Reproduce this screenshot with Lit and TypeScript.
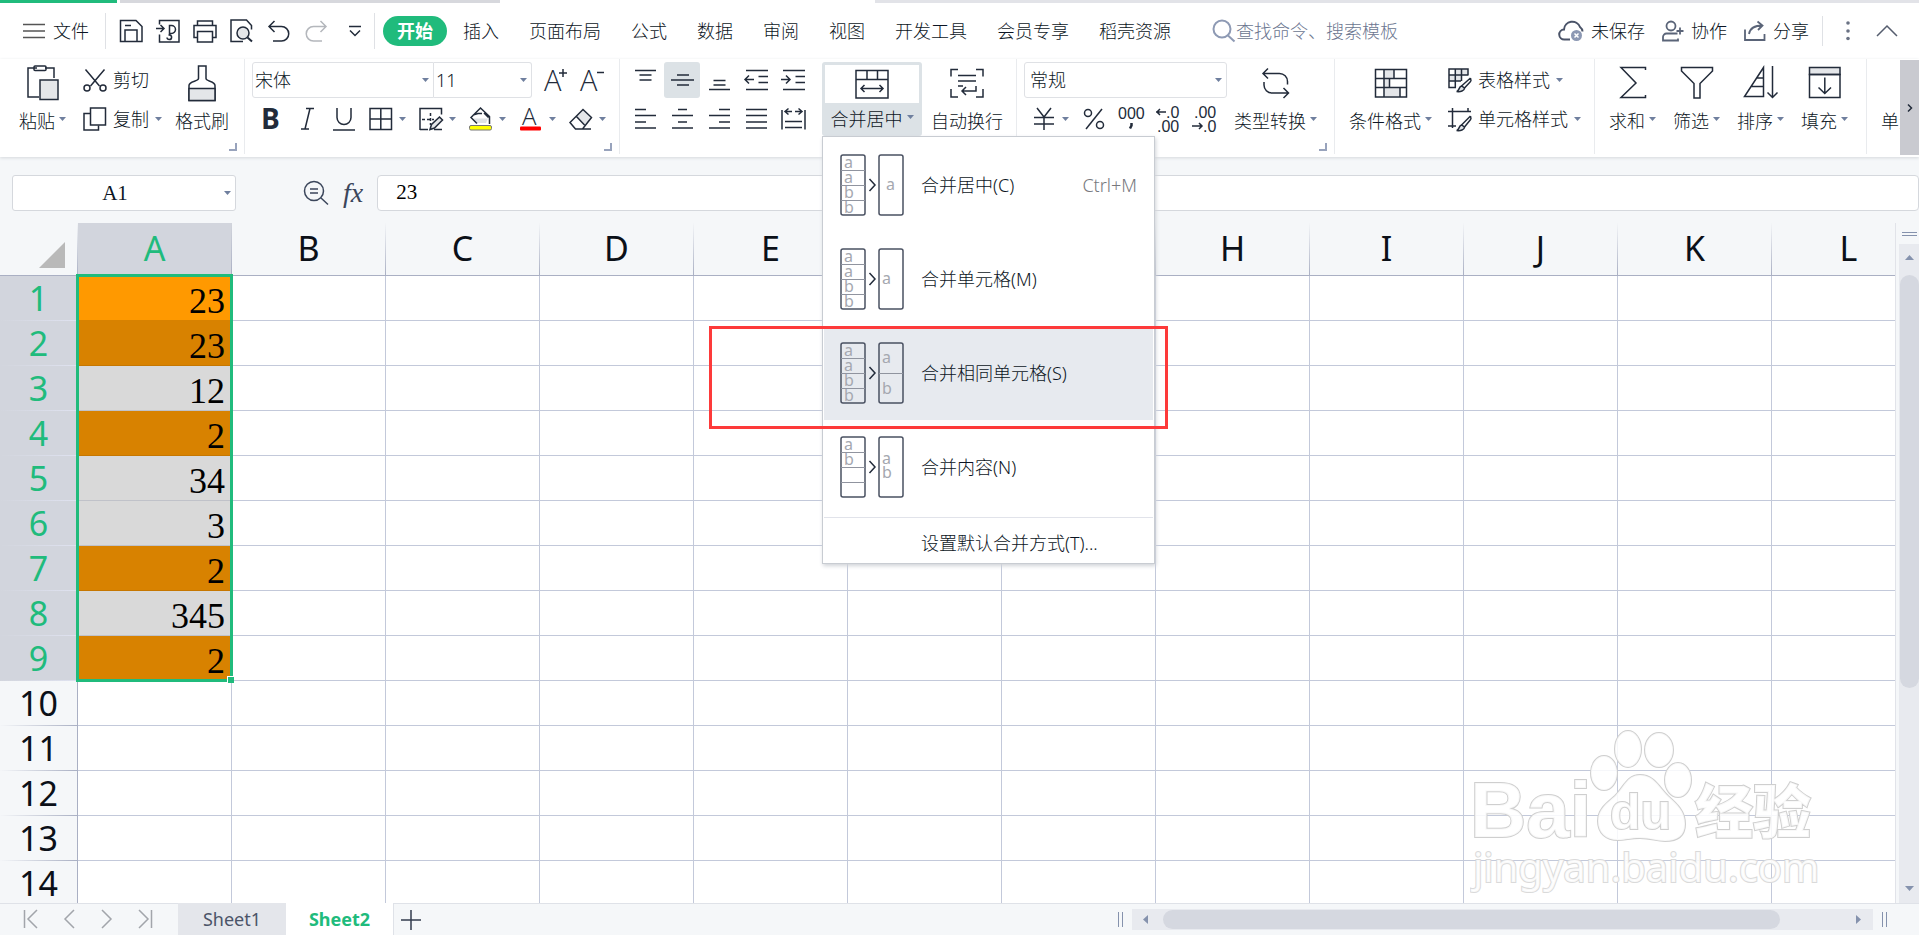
import { LitElement, html, css, svg, nothing } from "lit";
import { customElement, state } from "lit/decorators.js";
import { classMap } from "lit/directives/class-map.js";

const icon = (w: number, h: number, body: unknown) =>
  html`<svg class="icon" width=${w} height=${h} viewBox="0 0 ${w} ${h}" aria-hidden="true">${body}</svg>`;

const caret = html`<svg class="caret" width="7" height="4" viewBox="0 0 7 4" aria-hidden="true"><path d="M0 0h7L3.5 4z" /></svg>`;

const I = {
  menu: icon(22, 16, svg`<path d="M0 1.5h22M0 8h22M0 14.5h22" stroke="#555" />`),
  save: icon(24, 24, svg`<path d="M1.5 1.5h15.5l6 6v15h-21.5zM6 22v-11h12v11M6 6.5h6" />`),
  exportPdf: icon(24, 24, svg`<path d="M3.5 5.5v-4h19.5v21.5h-19.5v-7.5M0 9.5h7.5M4.500 6l3.5 3.5l-3.5 3.5M11 18.500a2.300 2.300 0 1 0 2.500-2.500h-1M13.500 16v-9.500h2a3.500 3.500 0 0 1 0 8h-2" />`),
  print: icon(24, 24, svg`<path d="M4.5 6.5v-4.5h15v4.5M4 18.5h-3v-12h22v12h-3M4.5 12.5h15v10.5h-15z" />`),
  preview: icon(24, 24, svg`<path d="M13 22.5h-12v-21.5h15.5l5 5.5v4" /><circle cx="13" cy="14" r="6" fill="#e4e6e9" /><path d="M17.5 18.5l4.5 4" stroke-width="2" />`),
  undo: icon(24, 24, svg`<path d="M7.5 2l-5.5 5.5l5.5 5.5M2 7.5h12.5a7 7 0 0 1 0 14.5h-8.5" />`),
  redo: icon(24, 24, svg`<path stroke="#b4b7bc" d="M16.5 2l5.5 5.5l-5.5 5.5M22 7.5h-12.5a7 7 0 0 0 0 14.5h8.5" />`),
  more: icon(12, 12, svg`<path d="M0 1.500h12M1 5.500l5 5l5-5" />`),
  search: icon(24, 24, svg`<g stroke="#8e9ab4" stroke-width="2"><circle cx="10" cy="10" r="8.5" /><path d="M16 16.500l6.500 6" /></g>`),
  cloud: icon(26, 24, svg`<path stroke="#4a5368" stroke-width="2" d="M12 20.500h-5.500a5 5 0 0 1 -.5-10a8.300 8.300 0 0 1 16-2.500c2 1.500 2.500 3 2.500 4.500" /><circle cx="18.5" cy="16.5" r="5.5" fill="#8c98b3" stroke="none" /><path stroke="#fff" d="M16.500 14.500l4 4M20.500 14.500l-4 4" />`),
  coop: icon(22, 22, svg`<g stroke="#5a6478" stroke-width="1.8"><circle cx="9" cy="6" r="4.5" /><path d="M15.500 13.500h-11a3.500 3.500 0 0 0 -3.500 3.500v3.500h15v-2M18 7.500v7M14.500 11h7" /></g>`),
  share: icon(22, 22, svg`<path stroke="#5a6478" stroke-width="1.8" d="M1 9.500v10.500h19.500v-6M5 14c1-6 5-8.500 13.500-8.500M13.500 1.500l5 4l-4.500 4.500" />`),
  dots: icon(4, 20, svg`<g fill="#6a7284" stroke="none"><circle cx="2" cy="2" r="1.8" /><circle cx="2" cy="10" r="1.8" /><circle cx="2" cy="17.5" r="1.8" /></g>`),
  up: icon(22, 14, svg`<path stroke="#555d6e" d="M1 12l10-10l10 10" />`),
  paste: icon(32, 36, svg`<path d="M10 3h-9v29h11M18 3h9v10" /><rect x="7" y="1" width="12" height="4.5" rx="1" /><rect x="13" y="15" width="18" height="19.5" fill="#e4e6e9" />`),
  cut: icon(24, 24, svg`<path d="M2.500 1.500l14 16.500M21.500 1.500l-14 16.500" /><circle cx="4" cy="20" r="3" /><circle cx="20" cy="20" r="3" />`),
  copy: icon(24, 24, svg`<rect x="7.5" y="1" width="15" height="17" /><path d="M7 6.500h-6v16.500h14.500v-4.500" />`),
  brush: icon(28, 36, svg`<path d="M10.500 1h7.500v12.500c0 3 9 2.500 9 7v15h-26v-15c0-4.500 9.500-4 9.500-7z" /><path d="M1 23.500h26v12h-26z" fill="#e4e6e9" />`),
  bigger: icon(24, 24, svg`<text x="0" y="23" class="glyph">A</text><path d="M19 1v8M15 5h8" />`),
  smaller: icon(24, 24, svg`<text x="0" y="23" class="glyph">A</text><path d="M17 4.500h7" />`),
  bold: icon(24, 24, svg`<text x="3" y="22" class="glyph heavy">B</text>`),
  italic: icon(24, 24, svg`<path d="M11 1.500h8M6 22h8M15 1.500l-5 20.500" />`),
  underline: icon(24, 24, svg`<path d="M5 1v9.500a7 7 0 0 0 14 0v-9.500M1 23h22" />`),
  borders: icon(24, 24, svg`<path d="M1 1.500h21.500v21h-21.500zM11.800 1.500v21M1 12h21.500" />`),
  drawBorder: icon(24, 24, svg`<path d="M1 23v-21.500h21.500v6M1 22.500h8M15 22.500h8" /><path d="M3 12.500h12M11.500 6v12" stroke-dasharray="3 2" /><path d="M11 22.500l1.500-5l8-7.500l3 3l-8 8z" fill="#e4e6e9" />`),
  fill: icon(24, 24, svg`<path d="M4 11.500h15l-2 4.500h-9z" fill="#dfe2e6" stroke="none" /><path d="M20.500 17v-7.500l-9-8.500l-9.500 9.500l6 6M4 8l5-1.500h4M15 6l4.500 4.500" /><rect x=".5" y="18.5" width="22" height="4.5" rx="1.5" fill="#ff0" stroke="#777" stroke-width="1" />`),
  fontColor: icon(24, 24, svg`<text x="3" y="18" class="glyph mid">A</text><rect x="1" y="19.5" width="21" height="4" rx="1" fill="#f00" stroke="none" />`),
  eraser: icon(24, 24, svg`<path d="M14 2.500l8.500 8l-7 7.500l-8.500-9z" fill="#e4e6e9" stroke="none" /><path d="M14 2.500l8.500 8l-9 11.500h-7l-5.500-6.500zM7 9l8.500 9M6 22h16" />`),
  top: icon(24, 24, svg`<path d="M2 2.500h21M6.500 7h12M6.500 12h12" />`),
  middle: icon(24, 24, svg`<path d="M1 12h23M7 7h12M7 17h12" />`),
  bottom: icon(24, 24, svg`<path d="M6.500 12.500h12M6.500 17h12M2 21.500h21" />`),
  outdent: icon(24, 24, svg`<path d="M2 2.500h22M14.500 8.500h9.500M14.500 14.500h9.500M2 21.500h22M1 11.500h9M5 7.500l-4 4l4 4" />`),
  indent: icon(24, 24, svg`<path d="M2 2.500h22M14.500 8.500h9.500M14.500 14.500h9.500M2 21.500h22M0 11.500h9M5 7.500l4 4l-4 4" />`),
  left: icon(24, 24, svg`<path d="M2 2.500h11M2 8.500h21M2 15h11M2 21h21" />`),
  center: icon(24, 24, svg`<path d="M8 2.500h9M2 8.500h21M8 15h9M2 21h21" />`),
  right: icon(24, 24, svg`<path d="M12 2.500h11M2 8.500h21M12 15h11M2 21h21" />`),
  justify: icon(24, 24, svg`<path d="M2 2.500h21M2 8.500h21M2 15h21M2 21h21" />`),
  distribute: icon(24, 24, svg`<path d="M1 3v19.500M24 3v19.500M4 14.500h17M4 20.500h17M4 4.500h7M14 4.500h7M7.500 1.500l-3.500 3l3.500 3M17.500 1.500l3.500 3l-3.500 3" />`),
  merge: icon(34, 30, svg`<path d="M1 1.500h32v27.500h-32zM1 10.500h32M12 1.500v9M22.500 1.500v9M6 19.500h22M9.500 16l-3.500 3.500l3.500 3.500M24.500 16l3.500 3.500l-3.500 3.500" />`),
  wrap: icon(34, 30, svg`<path d="M8 1.500h-7v7M26 1.500h7v7M1 21v8h7M33 21v8h-7M8 7.500h18M8 13h18M26 18v5h-14M16 19l-4 4l4 4M8 18h5" />`),
  convert: icon(30, 32, svg`<path d="M2.500 6.500h16a8 8 0 0 1 8 8v3M7 1.500l-5 5l5 5M3 15v3a8 8 0 0 0 8 8h16M22.500 21l5 5l-5 5" />`),
  yen: icon(24, 24, svg`<path d="M5 1l7 9l7-9M12 10v13M2 10.500h20M2 17h20" />`),
  percent: icon(24, 24, svg`<circle cx="6" cy="6" r="3.5" /><circle cx="18" cy="18" r="3.5" /><path d="M20 2l-16 20" />`),
  thousands: icon(24, 26, svg`<text x="-1" y="13" class="digits">000</text><path d="M12.500 17v2.500l-1.500 3" stroke-width="2.5" />`),
  decMore: icon(24, 26, svg`<text x="10" y="12" class="digits">.0</text><text x="1" y="26" class="digits">.00</text><path d="M0 6h10M4 3l-3 3l3 3" />`),
  decLess: icon(24, 26, svg`<text x="1" y="12" class="digits">.00</text><text x="10" y="26" class="digits">.0</text><path d="M-1 20h10M6 17l3 3l-3 3" />`),
  condFormat: icon(34, 30, svg`<path d="M10 1.500h10v9h-10zM10 10.500h5v9h-5zM10 19.500h16v9h-16z" fill="#e4e6e9" stroke="none" /><path d="M1.500 1.500h31v27.500h-31zM1.500 10.500h31M1.500 19.500h31M10 1.500v27.500M20 1.500v9M15.500 10.500v9M26 19.500v9.500" />`),
  tableStyle: icon(24, 24, svg`<path d="M7 1h13v6h-13zM1 7h12v6h-12z" fill="#e4e6e9" stroke="none" /><path d="M8 19.500h-7v-18.500h19v6.500M1 7h19M1 13h12M7.300 1v18.500M13.500 1v12M22.500 10l-9 8M23 13l-6.500 7M22.500 10l.5 3" /><path d="M8.500 23.500c3 0 2-5 5-5.500l3 2c0 3-4 4-8 3.500" fill="#dfe2e6" />`),
  cellStyle: icon(24, 24, svg`<path d="M0 4.500h23M4.500 1v20M0 19h8M20 1v4M22.500 9l-9 9M23 12l-6.500 8M22.500 9l.5 3" /><path d="M8.500 23.500c3 0 2-5 5-5.500l3 2c0 3-4 4-8 3.500" fill="#dfe2e6" />`),
  sum: icon(28, 34, svg`<path d="M26.500 4v-2.500h-24.500l15 15.500l-15 14.500h24.500v-2.500" />`),
  filter: icon(34, 34, svg`<path d="M1.500 1.500h31v3.500l-12.500 12.500v14.500h-6v-14.500l-12.500-12.500z" />`),
  sort: icon(36, 34, svg`<path d="M20.500 1.500l-19 29h19zM14 12h6.500M8.500 20.500h12M29.500 0v31M24.500 26.500l5 5l5-5" />`),
  fillDown: icon(34, 34, svg`<path d="M1.500 1.500h30.500v7h-30.500z" fill="#e4e6e9" /><path d="M1.500 8.500h30.500v23h-30.500zM16.800 11.500v16M10.500 21.500l6.300 6l6.200-6" />`),
  cell: icon(34, 34, svg`<path d="M5 9v2M5 27v2" />`),
  zoomOut: icon(26, 26, svg`<g stroke="#3b465b"><circle cx="11" cy="11" r="9.5" /><path d="M7 9h8M7 13h8M18 18l7 6.500" /></g>`),
  first: icon(16, 20, svg`<path d="M1.500 1v18M14 1l-9 9l9 9" />`),
  prev: icon(16, 20, svg`<path d="M13 1l-9 9l9 9" />`),
  next: icon(16, 20, svg`<path d="M3 1l9 9l-9 9" />`),
  last: icon(16, 20, svg`<path d="M14.500 1v18M2 1l9 9l-9 9" />`),
  plus: icon(20, 20, svg`<path stroke="#333c4e" d="M0 10h20M10 0v20" />`),
};

/* Preview of a merge mode: source cells on the left, merged result on the right. */
const mergeArt = (source: string[], result: { t: string; x: number; y: number }[], split = false) =>
  icon(64, 62, svg`
    <g stroke="#4a5162"><rect x="1" y="1" width="24" height="60" rx="2" /><rect x="39" y="1" width="24" height="60" rx="2" /></g>
    <path stroke="#90949f" stroke-width="1" d="M1 16.500h24M1 31.500h24M1 46.500h24" />
    ${split ? svg`<path stroke="#90949f" stroke-width="1" d="M39 31.500h24" />` : nothing}
    <path d="M29.500 25l5.500 6l-5.500 6" />
    ${source.map((t, i) => svg`<text x="4" y=${14 + i * 15} class="tiny">${t}</text>`)}
    ${result.map((r) => svg`<text x=${r.x} y=${r.y} class="tiny">${r.t}</text>`)}
  `);

const MERGE_MODES = [
  { label: "合并居中(C)", key: "Ctrl+M", art: mergeArt(["a", "a", "b", "b"], [{ t: "a", x: 46, y: 36 }]) },
  { label: "合并单元格(M)", key: "", art: mergeArt(["a", "a", "b", "b"], [{ t: "a", x: 42, y: 36 }]) },
  { label: "合并相同单元格(S)", key: "", art: mergeArt(["a", "a", "b", "b"], [{ t: "a", x: 42, y: 21 }, { t: "b", x: 42, y: 52 }], true) },
  { label: "合并内容(N)", key: "", art: mergeArt(["a", "b"], [{ t: "a", x: 42, y: 28 }, { t: "b", x: 42, y: 42 }]) },
];

const TABS = ["开始", "插入", "页面布局", "公式", "数据", "审阅", "视图", "开发工具", "会员专享", "稻壳资源"];
const COLUMNS = "ABCDEFGHIJKL".split("");
const VALUES = ["23", "23", "12", "2", "34", "3", "2", "345", "2"];
const FILLED = [0, 1, 3, 6, 8];

@customElement("app-root")
export class AppRoot extends LitElement {
  @state() private hovered = 2;

  static styles = css`
    :host {
      --ink: #222b3a;
      --green: #20bb7c;
      --line: #c3c9da;
      --head-line: #a9afc3;
      --panel: #f5f7f9;
      display: flex;
      flex-direction: column;
      height: 100vh;
      overflow: hidden;
      background: var(--panel);
      color: #0c1524;
      font: 18px/24px "Noto Sans", "Noto Sans CJK SC", sans-serif;
      font-weight: 300;
    }
    * { box-sizing: border-box; }
    button, input, select { font: inherit; color: inherit; margin: 0; padding: 0; border: 0; background: none; border-radius: 0; outline: none; }
    button { display: inline-flex; align-items: center; white-space: nowrap; }
    .icon { display: block; flex: none; fill: none; stroke: var(--ink); stroke-width: 1.5; overflow: visible; }
    .caret { display: block; flex: none; fill: #6f7f9e; }
    .glyph { font: 300 29px "Open Sans", "Noto Sans", sans-serif; fill: var(--ink); stroke: none; }
    .mid { font-size: 24px; }
    .heavy { font-weight: 700; font-size: 28px; }
    .digits { font: 16px "Liberation Sans", sans-serif; fill: var(--ink); stroke: none; }
    .tiny { font: 16px "Noto Sans", sans-serif; fill: #a5a8b0; stroke: none; }

    .strip { display: grid; grid-template-columns: 117px 3px 380px 375px 1fr; height: 3px; background: #fff; flex: none; }
    .strip .on { background: var(--green); }
    .strip .off { background: #d7d8dd; }
    .strip .rest { grid-column: 5; background: #e2e3e8; }

    .menubar { display: flex; align-items: center; height: 56px; background: #fff; flex: none; padding: 0 21px 0 23px; }
    .file { gap: 8px; margin-right: 16px; }
    .rule { width: 1px; height: 36px; background: #dfe1e5; flex: none; }
    .quick { display: flex; gap: 13px; padding: 0 13px; align-items: center; }
    .quick button:last-child { padding: 0 0 0 8px; }
    .tabs { display: flex; align-items: center; gap: 30px; margin-left: 8px; }
    .tabs .current { height: 30px; padding: 0 14px; margin-right: -14px; border-radius: 15px; background: var(--green); color: #fff; font-weight: 700; }
    .search { display: flex; align-items: center; margin-left: 41px; flex: 1; }
    .search input { width: 180px; }
    .search input::placeholder { color: #6b7690; opacity: 1; }
    .status { display: flex; align-items: center; gap: 17px; }
    .status button { gap: 7px; }
    .status .rule { height: 30px; margin: 0 6px 0 -4px; }
    .status .dots { margin-right: 9px; }

    .ribbon { display: flex; align-items: flex-start; height: 98px; background: #fff; flex: none; position: relative; z-index: 5; box-shadow: 0 1px 3px #d5d8dc; }
    .group { display: flex; align-items: flex-start; height: 95px; padding-top: 3px; border-right: 1px solid #e9ebee; position: relative; flex: none; }
    .launch { position: absolute; right: 7px; bottom: 3px; width: 8px; height: 8px; border: solid #98a3bc; border-width: 0 2px 2px 0; }
    .big { flex-direction: column; }
    .big .pic { display: grid; place-items: center; height: 42px; }
    .big .cap { display: flex; align-items: center; gap: 4px; height: 34px; }
    .big .caret { margin-bottom: 4px; }
    .stack { display: flex; flex-direction: column; gap: 3px; align-items: flex-start; }
    .row { display: flex; align-items: center; height: 36px; }
    .item { gap: 6px; height: 36px; }
    .clip { padding-left: 19px; padding-right: 15px; }
    .clip .stack { margin: 0 13px 0 17px; }
    .font { padding-left: 7px; width: 375px; }
    .font .tools { gap: 13px; padding-left: 6px; }
    .font .sizes { gap: 12px; }
    .combos { display: flex; }
    .combo { display: grid; align-items: center; height: 36px; border: 1px solid #dfe1e5; border-radius: 3px; background: #fff; }
    .combo > * { grid-area: 1 / 1; }
    .combo select { appearance: none; width: 100%; height: 34px; padding-left: 2px; }
    .combo .caret { justify-self: end; margin-right: 4px; pointer-events: none; }
    .combo.family { width: 182px; border-radius: 3px 0 0 3px; }
    .combo.size { width: 98px; border-left: 0; border-radius: 0 3px 3px 0; }
    .combo.format { width: 203px; }
    .combo.format select { padding-left: 5px; }
    .align { padding: 3px 13px 0 7px; }
    .align .row { gap: 1px; }
    .align .row button { width: 36px; height: 36px; justify-content: center; border-radius: 3px; }
    .align .row .pressed { background: #dce2e6; }
    .merge { position: relative; margin: 0 9px 0 11px; }
    .merge > button { width: 100px; background: #dce2e6; border-radius: 3px; padding: 3px 3px 0; height: 74px; }
    .merge .pic { width: 94px; height: 39px; background: #fff; }
    .number { padding-left: 7px; padding-right: 17px; }
    .number .stack { margin-right: 7px; }
    .number .tools { gap: 13px; padding-left: 8px; }
    .styles { padding-left: 14px; padding-right: 13px; gap: 16px; }
    .data { padding-left: 14px; padding-right: 18px; gap: 17px; }
    .tail { flex: 1 1 0; min-width: 0; overflow: hidden; padding-left: 14px; border: 0; }
    .scroll { width: 19px; height: 95px; margin-top: 1px; background: #c9cad0; justify-content: center; flex: none; }

    .menu { position: absolute; left: 0; top: 74px; width: 333px; padding: 4px 1px 0; background: #fff; border: 1px solid #c8ccd2; box-shadow: 1px 2px 4px #d0d3d8; z-index: 10; }
    .menu button { width: 100%; height: 91px; margin-bottom: 3px; padding: 0 16px 4px; gap: 17px; }
    .menu button.hover { background: #e7eaef; }
    .menu .key { margin-left: auto; color: #76787d; }
    .menu button.foot { height: 46px; margin: 0; padding: 4px 0 0 97px; border-top: 1px solid #e1e3ea; }
    .marker { position: absolute; left: -114px; top: 189px; width: 459px; height: 103px; border: 3px solid #fd3a3a; pointer-events: none; }

    .formula { display: flex; align-items: center; height: 66px; padding: 6px 0 0 12px; flex: none; }
    .namebox { display: grid; align-items: center; width: 224px; height: 36px; border: 1px solid #d5d8dd; border-radius: 3px; background: #fff; }
    .namebox > * { grid-area: 1 / 1; }
    .namebox input { width: 100%; height: 34px; text-align: center; padding-right: 18px; font: 21px "Liberation Serif", serif; }
    .namebox .caret { justify-self: end; margin-right: 4px; }
    .tools2 { display: flex; align-items: center; gap: 14px; margin: 0 14px 0 67px; }
    .fx { font: italic 28px/30px "Liberation Serif", serif; color: #3b465b; }
    .entry { flex: 1; min-width: 0; height: 36px; }
    .formula .entry { border: 1px solid #d5d8dd; background: #fff; padding: 0 18px 2px; border-radius: 4px; font: 21px "Liberation Serif", serif; color: #000; }

    .body { display: flex; flex: 1; min-height: 0; }
    .sheet { flex: 1; min-width: 0; overflow: hidden; position: relative; background: #fff; }
    table { table-layout: fixed; width: 1926px; border-collapse: separate; border-spacing: 0; }
    th, td { padding: 0; height: 45px; border: solid var(--line); border-width: 0 1px 1px 0; }
    .rowhead { width: 78px; }
    .col { width: 154px; }
    th { font: 34px/44px "Noto Sans", sans-serif; color: #0b1018; background: var(--panel); text-align: center; }
    thead th { height: 53px; padding-bottom: 2px; border-color: var(--head-line); border-image: linear-gradient(transparent, var(--head-line)) 1; }
    thead th.sel { background: #d2d5dd; }
    tbody th { border-right-color: var(--head-line); border-image: linear-gradient(90deg, transparent, var(--head-line)) 1; }
    tbody th.sel { background: #d2d5dd; border-image: linear-gradient(90deg, transparent, #dfe2f0) 1; }
    th.sel { color: var(--green); }
    .corner svg { display: block; margin: 13px 0 0 39px; }
    td { font: 36px/38px "Liberation Serif", serif; color: #000; text-align: right; padding: 6px 6px 0 0; }
    td.plain { background: #d9d9d9; border-color: #c0c2c9; }
    td.filled { background: #d88200; border-color: #c67700; }
    td.active { background: #ff9900; border-color: #d88200; }
    .range { position: absolute; left: 76px; top: 51px; width: 157px; height: 408px; border: 3px solid var(--green); pointer-events: none; }
    .range::after { content: ""; position: absolute; right: -4px; bottom: -4px; width: 6px; height: 6px; background: var(--green); border: solid #fff; border-width: 1px 0 0 1px; }
    .mark { position: absolute; right: 73px; bottom: 0; pointer-events: none; }
    .mark text, .mark g { fill: #fff; fill-opacity: .85; stroke: #cfcfcf; stroke-width: 2; paint-order: stroke; }
    .mark .latin { font: 700 78px "Liberation Sans", sans-serif; }
    .mark .paw { font: 700 50px "Liberation Sans", sans-serif; }
    .mark .han { font: 900 58px "Noto Sans CJK SC", sans-serif; }
    .mark .url { font: 400 40px "Noto Sans", sans-serif; stroke: #dadada; }

    .rail { display: flex; flex-direction: column; width: 24px; padding-left: 3px; border-left: 1px solid #e1e3e9; flex: none; }
    .rail .grip { display: grid; place-items: center; height: 21px; }
    .vtrack { display: flex; flex-direction: column; flex: 1; background: #e8eaef; padding: 0 0 12px 1px; align-items: center; }
    .vtrack .thumb { width: 100%; flex: 1; margin-bottom: 198px; border-radius: 10px; background: #d5d8e0; }
    .vtrack svg { margin: 11px 0 15px; fill: #8592ad; }
    .vtrack svg:last-child { margin: 0; }

    .foot-bar { display: flex; align-items: stretch; height: 32px; border-top: 1px solid #dfe2e8; flex: none; }
    .nav { display: flex; gap: 22px; padding-left: 23px; width: 178px; --ink: #a2a5ab; }
    .nav .item { height: 30px; }
    .sheets { display: flex; margin-top: -1px; }
    .sheets button { width: 108px; justify-content: center; background: #e4e6eb; color: #4b5468; font-weight: 400; }
    .sheets .open { background: #fff; color: var(--green); font-weight: 700; border-right: 1px solid #dfe2e8; }
    .add { padding: 0 7px; }
    .hbar { display: flex; align-items: center; margin-left: auto; gap: 9px; width: 801px; }
    .split { width: 5px; height: 15px; border: solid #8592ad; border-width: 0 1px; flex: none; }
    .htrack { display: flex; align-items: center; flex: 1; height: 21px; background: #e8eaef; padding: 1px 12px 1px 11px; }
    .htrack svg { fill: #8592ad; flex: none; }
    .htrack .thumb { flex: 1; height: 19px; margin: 0 76px 0 15px; border-radius: 10px; background: #d5d8e0; }
    .hbar .split:last-child { margin-right: 32px; }
  `;

  private big(pic: unknown, label: string, drop = true) {
    return html`<button class="big"><span class="pic">${pic}</span><span class="cap">${label}${drop ? caret : nothing}</span></button>`;
  }

  private item(pic: unknown, label: string, drop = false) {
    return html`<button class="item">${pic}${label}${drop ? caret : nothing}</button>`;
  }

  private tool(pic: unknown, name: string, drop = false, pressed = false) {
    return html`<button class=${classMap({ item: true, pressed })} aria-label=${name}>${pic}${drop ? caret : nothing}</button>`;
  }

  private renderMenubar() {
    return html`
      <nav class="menubar">
        <button class="file">${I.menu}文件</button>
        <span class="rule"></span>
        <div class="quick">
          ${this.tool(I.save, "保存")}${this.tool(I.exportPdf, "输出为PDF")}${this.tool(I.print, "打印")}
          ${this.tool(I.preview, "打印预览")}${this.tool(I.undo, "撤销")}${this.tool(I.redo, "恢复")}${this.tool(I.more, "自定义")}
        </div>
        <span class="rule"></span>
        <div class="tabs">
          ${TABS.map((t, i) => html`<button class=${classMap({ current: i === 0 })}>${t}</button>`)}
        </div>
        <label class="search">${I.search}<input type="search" aria-label="查找" placeholder="查找命令、搜索模板" /></label>
        <div class="status">
          <button>${I.cloud}未保存</button>
          <button>${I.coop}协作</button>
          <button>${I.share}分享</button>
          <span class="rule"></span>
          <button class="dots" aria-label="更多">${I.dots}</button>
          <button aria-label="折叠功能区">${I.up}</button>
        </div>
      </nav>
    `;
  }

  private renderMenu() {
    return html`
      <div class="menu">
        ${MERGE_MODES.map(
          (m, i) => html`
            <button class=${classMap({ hover: i === this.hovered })} @mouseenter=${() => (this.hovered = i)}>
              ${m.art}<span>${m.label}</span>${m.key ? html`<span class="key">${m.key}</span>` : nothing}
            </button>
          `
        )}
        <button class="foot">设置默认合并方式(T)...</button>
        <div class="marker"></div>
      </div>
    `;
  }

  private renderRibbon() {
    return html`
      <div class="ribbon">
        <section class="group clip">
          ${this.big(I.paste, "粘贴")}
          <div class="stack">${this.item(I.cut, "剪切")}${this.item(I.copy, "复制", true)}</div>
          ${this.big(I.brush, "格式刷", false)}
          <span class="launch"></span>
        </section>
        <section class="group font">
          <div class="stack">
            <div class="row sizes">
              <div class="combos">
                <div class="combo family"><select aria-label="字体"><option>宋体</option></select>${caret}</div>
                <div class="combo size"><select aria-label="字号"><option>11</option></select>${caret}</div>
              </div>
              ${this.tool(I.bigger, "增大字号")}${this.tool(I.smaller, "减小字号")}
            </div>
            <div class="row tools">
              ${this.tool(I.bold, "加粗")}${this.tool(I.italic, "倾斜")}${this.tool(I.underline, "下划线")}
              ${this.tool(I.borders, "边框", true)}${this.tool(I.drawBorder, "绘制边框", true)}${this.tool(I.fill, "填充颜色", true)}
              ${this.tool(I.fontColor, "字体颜色", true)}${this.tool(I.eraser, "清除", true)}
            </div>
          </div>
          <span class="launch"></span>
        </section>
        <section class="group align">
          <div class="stack">
            <div class="row">
              ${this.tool(I.top, "顶端对齐")}${this.tool(I.middle, "垂直居中", false, true)}${this.tool(I.bottom, "底端对齐")}
              ${this.tool(I.outdent, "减少缩进")}${this.tool(I.indent, "增加缩进")}
            </div>
            <div class="row">
              ${this.tool(I.left, "左对齐")}${this.tool(I.center, "水平居中")}${this.tool(I.right, "右对齐")}
              ${this.tool(I.justify, "两端对齐")}${this.tool(I.distribute, "分散对齐")}
            </div>
          </div>
          <div class="merge">${this.big(I.merge, "合并居中")}${this.renderMenu()}</div>
          ${this.big(I.wrap, "自动换行", false)}
        </section>
        <section class="group number">
          <div class="stack">
            <div class="combo format"><select aria-label="数字格式"><option>常规</option></select>${caret}</div>
            <div class="row tools">
              ${this.tool(I.yen, "货币", true)}${this.tool(I.percent, "百分比")}${this.tool(I.thousands, "千位分隔")}
              ${this.tool(I.decMore, "增加小数位")}${this.tool(I.decLess, "减少小数位")}
            </div>
          </div>
          ${this.big(I.convert, "类型转换")}
          <span class="launch"></span>
        </section>
        <section class="group styles">
          ${this.big(I.condFormat, "条件格式")}
          <div class="stack">${this.item(I.tableStyle, "表格样式", true)}${this.item(I.cellStyle, "单元格样式", true)}</div>
        </section>
        <section class="group data">
          ${this.big(I.sum, "求和")}${this.big(I.filter, "筛选")}${this.big(I.sort, "排序")}${this.big(I.fillDown, "填充")}
        </section>
        <section class="group tail">${this.big(I.cell, "单元格")}</section>
        <button class="scroll" aria-label="向右滚动">${icon(6, 8, svg`<path d="M1 .5l3.500 3.500l-3.500 3.500" />`)}</button>
      </div>
    `;
  }

  private renderSheet() {
    const rows = Array.from({ length: 14 }, (_, i) => i);
    return html`
      <div class="body">
        <div class="sheet">
          <table>
            <colgroup><col class="rowhead" />${COLUMNS.map(() => html`<col class="col" />`)}</colgroup>
            <thead>
              <tr>
                <th class="corner"><svg width="26" height="26" viewBox="0 0 26 26"><path d="M26 0v26H0z" fill="#b9b9b9" /></svg></th>
                ${COLUMNS.map((c, i) => html`<th scope="col" class=${classMap({ sel: i === 0 })}>${c}</th>`)}
              </tr>
            </thead>
            <tbody>
              ${rows.map(
                (r) => html`
                  <tr>
                    <th scope="row" class=${classMap({ sel: r < VALUES.length })}>${r + 1}</th>
                    ${COLUMNS.map((_, c) => {
                      const used = c === 0 && r < VALUES.length;
                      const filled = used && FILLED.includes(r);
                      return html`<td class=${classMap({ plain: used && !filled, filled: filled && r > 0, active: used && r === 0 })}>${used ? VALUES[r] : nothing}</td>`;
                    })}
                  </tr>
                `
              )}
            </tbody>
          </table>
          <div class="range"></div>
          <svg class="mark" width="352" height="178" viewBox="0 0 352 178" aria-hidden="true">
            <text class="latin" x="0" y="112">Bai</text>
            <g>
              <ellipse cx="134" cy="48" rx="13" ry="17" /><ellipse cx="158" cy="24" rx="13" ry="18" />
              <ellipse cx="189" cy="25" rx="14" ry="17" /><ellipse cx="208" cy="55" rx="13" ry="17" />
              <path d="M170 50c14 0 19 12 28 21c9 8 17 15 17 28c0 12-8 17-20 17c-9 0-14-3-25-3c-10 0-14 2-22 2c-12 0-20-7-20-19c0-12 9-18 17-25c9-9 12-21 25-21z" />
            </g>
            <text class="paw" x="140" y="104">du</text>
            <text class="han" x="225" y="108">经验</text>
            <text class="url" x="3" y="157">jingyan.baidu.com</text>
          </svg>
        </div>
        <div class="rail">
          <div class="grip">${icon(15, 6, svg`<path stroke="#8592ad" stroke-width="1" d="M0 1.500h15M0 4.500h15" />`)}</div>
          <div class="vtrack">
            <svg width="9" height="5" viewBox="0 0 9 5"><path d="M0 5h9L4.500 0z" /></svg>
            <div class="thumb"></div>
            <svg width="9" height="5" viewBox="0 0 9 5"><path d="M0 0h9L4.500 5z" /></svg>
          </div>
        </div>
      </div>
    `;
  }

  render() {
    return html`
      <div class="strip"><span class="on"></span><span></span><span class="off"></span><span class="rest"></span></div>
      ${this.renderMenubar()} ${this.renderRibbon()}
      <div class="formula">
        <div class="namebox"><input aria-label="名称框" .value=${"A1"} />${caret}</div>
        <div class="tools2">${I.zoomOut}<button class="fx">fx</button></div>
        <input class="entry" aria-label="编辑栏" .value=${"23"} />
      </div>
      ${this.renderSheet()}
      <footer class="foot-bar">
        <div class="nav">${this.tool(I.first, "首个")}${this.tool(I.prev, "上一个")}${this.tool(I.next, "下一个")}${this.tool(I.last, "末个")}</div>
        <div class="sheets"><button>Sheet1</button><button class="open">Sheet2</button></div>
        <button class="add" aria-label="新建工作表">${I.plus}</button>
        <div class="hbar">
          <span class="split"></span>
          <div class="htrack">
            <svg width="5" height="9" viewBox="0 0 5 9"><path d="M5 0v9L0 4.500z" /></svg>
            <div class="thumb"></div>
            <svg width="5" height="9" viewBox="0 0 5 9"><path d="M0 0v9L5 4.500z" /></svg>
          </div>
          <span class="split"></span>
        </div>
      </footer>
    `;
  }
}
